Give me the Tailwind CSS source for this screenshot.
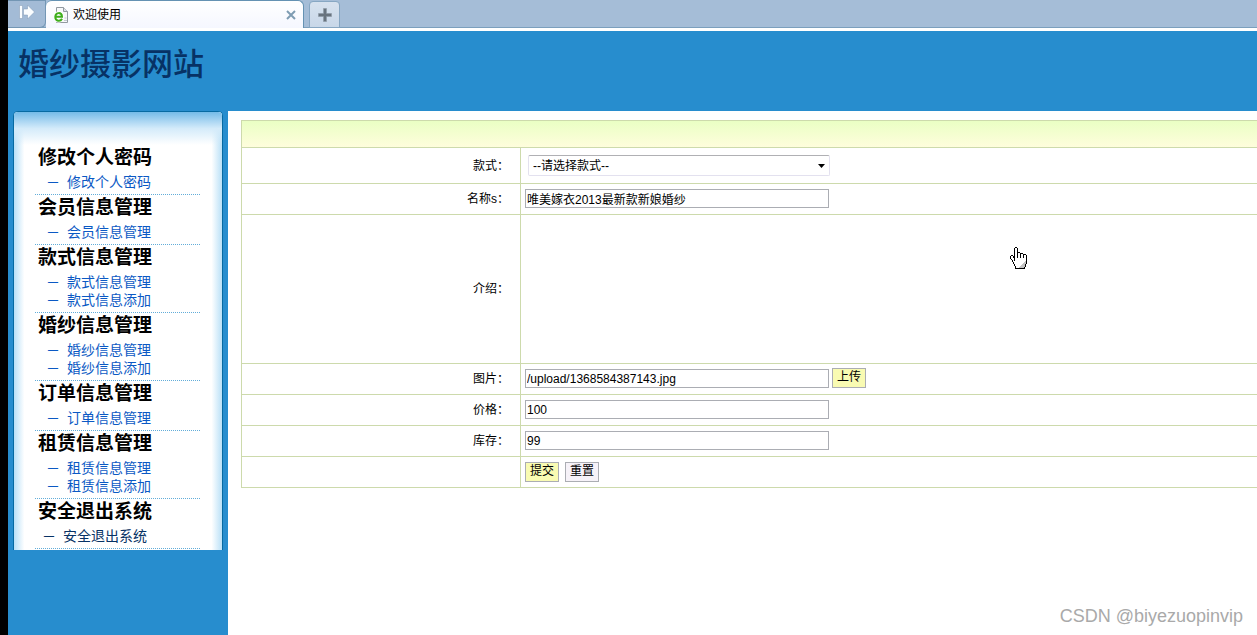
<!DOCTYPE html>
<html lang="zh-CN">
<head>
<meta charset="utf-8">
<title>欢迎使用</title>
<script src="https://cdn.jsdelivr.net/npm/@tailwindcss/browser@4"></script>
</head>
<body class="flex min-h-screen flex-col overflow-hidden border-l-8 border-black bg-white font-['Liberation_Sans','Noto_Sans_CJK_SC',sans-serif] text-xs text-black">

<!-- Browser tab strip -->
<div class="flex h-[28px] shrink-0 border-b border-[#7b9fbd] bg-[#a5bdd7]">
  <button type="button" aria-label="展开" class="flex h-[28px] w-[38px] items-start justify-center rounded-br-md border-t border-r border-b border-[#7396b4] bg-[#a3bbd6] pt-[3px]">
    <svg class="h-[16px] w-[18px]" viewBox="0 0 18 16" fill="#fafdff" stroke="#8099b5" stroke-width=".5"><path d="M1.500 1.500h3v13h-3z"/><path d="M5.500 5h4V1l7 7-7 7v-4h-4z"/></svg>
  </button>
  <div class="flex h-[28px] w-[258px] items-center rounded-t-md border-t border-r border-[#6592b3] bg-linear-to-b from-white to-[#f5f7ff] pl-[8px] pr-[7px]">
    <svg class="mr-[4px] h-[16px] w-[15px]" viewBox="0 0 15 16"><path d="M2.500.5h7l4 4v11h-11z" fill="#f7f8fa" stroke="#9299a0"/><path d="M9.500.5v4h4" fill="#dde2e7" stroke="#9299a0"/><path d="M10 13.500h3M10.500 11h2" stroke="#c5cad0"/><path d="M1.500 9.800H8C7.800 4.800 1.600 5 1.300 9.800c-.2 4.600 5.200 5 6.700 2" fill="none" stroke="#fff" stroke-width="3.600"/><path d="M1.500 9.800H8C7.800 4.800 1.600 5 1.300 9.800c-.2 4.600 5.200 5 6.700 2" fill="none" stroke="#3fae1c" stroke-width="2"/></svg>
    <span class="flex-1">欢迎使用</span>
    <button type="button" aria-label="关闭标签"><svg class="h-[10px] w-[10px]" viewBox="0 0 10 10" stroke="#7e9cb3" stroke-width="2"><path d="M1 1l8 8M9 1l-8 8"/></svg></button>
  </div>
  <button type="button" aria-label="新标签" class="mt-px ml-[5px] flex h-[27px] w-[31px] items-center justify-center rounded-t border border-[#87a7c3] bg-linear-to-b from-[#d7e2ef] to-[#c8d7e8]">
    <svg class="h-[14px] w-[14px]" viewBox="0 0 14 14"><path d="M5.500.5h3v5h5v3h-5v5h-3v-5h-5v-3h5z" fill="#68737e" stroke="#8c98a5" stroke-width=".6"/></svg>
  </button>
</div>

<header class="mt-[3px] h-20 shrink-0 bg-[#278dce] pl-[10px] pt-[11px]">
  <h1 class="text-[31px] leading-[46px] font-medium text-[#073265]">婚纱摄影网站</h1>
</header>

<div class="flex flex-1">
  <aside class="w-[220px] shrink-0 bg-[#278dce] pl-[5px]">
    <nav class="w-[210px] rounded-t-[5px] border-x border-t border-[#076aa2] bg-white">
      <div class="rounded-t bg-linear-to-r from-[#b9e0f7] via-white via-5% to-white">
      <div class="rounded-t bg-linear-to-l from-[#b9e0f7] via-white/0 via-5% to-white/0 pb-px">
        <div class="h-[33px] rounded-t bg-linear-to-b from-[#74bbe8] via-[#d4ebfa] via-50% to-white/0"></div>
        <div class="ml-[21px] mr-[22px] text-sm text-[#0b59c4]">
          <section class="border-b border-dotted border-[#62add9] pb-[3px]">
            <h2 class="pl-[3px] text-[19px] leading-[26px] font-bold text-black">修改个人密码</h2>
            <a href="#" class="mt-[2px] flex gap-[7px] pl-[11px] leading-[18px]"><span>－</span>修改个人密码</a>
          </section>
          <section class="border-b border-dotted border-[#62add9] pb-[3px]">
            <h2 class="pl-[3px] text-[19px] leading-[26px] font-bold text-black">会员信息管理</h2>
            <a href="#" class="mt-[2px] flex gap-[7px] pl-[11px] leading-[18px]"><span>－</span>会员信息管理</a>
          </section>
          <section class="border-b border-dotted border-[#62add9] pb-[3px]">
            <h2 class="pl-[3px] text-[19px] leading-[26px] font-bold text-black">款式信息管理</h2>
            <a href="#" class="mt-[2px] flex gap-[7px] pl-[11px] leading-[18px]"><span>－</span>款式信息管理</a>
            <a href="#" class="flex gap-[7px] pl-[11px] leading-[18px]"><span>－</span>款式信息添加</a>
          </section>
          <section class="border-b border-dotted border-[#62add9] pb-[3px]">
            <h2 class="pl-[3px] text-[19px] leading-[26px] font-bold text-black">婚纱信息管理</h2>
            <a href="#" class="mt-[2px] flex gap-[7px] pl-[11px] leading-[18px]"><span>－</span>婚纱信息管理</a>
            <a href="#" class="flex gap-[7px] pl-[11px] leading-[18px]"><span>－</span>婚纱信息添加</a>
          </section>
          <section class="border-b border-dotted border-[#62add9] pb-[3px]">
            <h2 class="pl-[3px] text-[19px] leading-[26px] font-bold text-black">订单信息管理</h2>
            <a href="#" class="mt-[2px] flex gap-[7px] pl-[11px] leading-[18px]"><span>－</span>订单信息管理</a>
          </section>
          <section class="border-b border-dotted border-[#62add9] pb-[3px]">
            <h2 class="pl-[3px] text-[19px] leading-[26px] font-bold text-black">租赁信息管理</h2>
            <a href="#" class="mt-[2px] flex gap-[7px] pl-[11px] leading-[18px]"><span>－</span>租赁信息管理</a>
            <a href="#" class="flex gap-[7px] pl-[11px] leading-[18px]"><span>－</span>租赁信息添加</a>
          </section>
          <section class="border-b border-dotted border-[#62add9] pb-[3px]">
            <h2 class="pl-[3px] text-[19px] leading-[26px] font-bold text-black">安全退出系统</h2>
            <a href="#" class="mt-[2px] flex gap-[7px] pl-[7px] leading-[18px] text-[#073265]"><span>－</span>安全退出系统</a>
          </section>
        </div>
      </div>
      </div>
    </nav>
  </aside>

  <main class="min-w-0 flex-1 overflow-hidden pl-[13px] pt-[9px]">
    <form>
      <table class="w-[calc(100%+8px)] table-fixed border-collapse border border-[#cddaac]">
        <colgroup><col class="w-[279px]"><col></colgroup>
        <thead>
          <tr class="h-[27px] bg-linear-to-b from-[#eaffc4] to-[#fffddd]"><th colspan="2" class="border border-[#cddaac]"></th></tr>
        </thead>
        <tbody>
          <tr class="h-[36px]">
            <td class="border border-[#cddaac] pr-[11px] text-right"><label for="style">款式：</label></td>
            <td class="border border-[#cddaac] pl-[7px]">
              <div class="relative flex w-[302px]">
                <select id="style" class="h-[21px] w-full appearance-none rounded-[2px] border border-[#e3e1ef] border-t-[#b0b0b4] bg-white pl-1 text-xs leading-[18px]"><option>--请选择款式--</option></select>
                <svg class="pointer-events-none absolute top-[9px] right-[5px] h-1 w-[7px]" viewBox="0 0 7 4"><path d="M0 0h7L3.500 4z"/></svg>
              </div>
            </td>
          </tr>
          <tr class="h-[31px]">
            <td class="border border-[#cddaac] pr-[11px] text-right"><label for="name">名称s：</label></td>
            <td class="border border-[#cddaac] pb-px pl-1"><input id="name" type="text" value="唯美嫁衣2013最新款新娘婚纱" class="block h-[19px] w-[304px] border border-[#abadb3] px-px leading-[17px]"></td>
          </tr>
          <tr class="h-[149px]">
            <td class="border border-[#cddaac] pr-[11px] text-right">介绍：</td>
            <td class="border border-[#cddaac]"></td>
          </tr>
          <tr class="h-[31px]">
            <td class="border border-[#cddaac] pr-[11px] text-right"><label for="picture">图片：</label></td>
            <td class="border border-[#cddaac] pb-[2px] pl-1"><div class="flex items-end gap-[3px]"><input id="picture" type="text" value="/upload/1368584387143.jpg" class="h-[19px] w-[304px] border border-[#abadb3] px-px leading-[17px]"><button type="button" class="h-5 w-[34px] border border-[#abadb3] bg-[#f9fbb2] pb-[2px] leading-4">上传</button></div></td>
          </tr>
          <tr class="h-[31px]">
            <td class="border border-[#cddaac] pr-[11px] text-right"><label for="price">价格：</label></td>
            <td class="border border-[#cddaac] pb-px pl-1"><input id="price" type="text" value="100" class="block h-[19px] w-[304px] border border-[#abadb3] px-px leading-[17px]"></td>
          </tr>
          <tr class="h-[31px]">
            <td class="border border-[#cddaac] pr-[11px] text-right"><label for="stock">库存：</label></td>
            <td class="border border-[#cddaac] pb-px pl-1"><input id="stock" type="text" value="99" class="block h-[19px] w-[304px] border border-[#abadb3] px-px leading-[17px]"></td>
          </tr>
          <tr class="h-[31px]">
            <td class="border border-[#cddaac]"></td>
            <td class="border border-[#cddaac] pl-1"><div class="flex gap-[6px]"><button type="submit" class="h-5 w-[34px] border border-[#abadb3] bg-[#f9fbb2] pb-[2px] leading-4">提交</button><button type="reset" class="h-5 w-[34px] border border-[#abadb3] bg-[#f6f2f8] pb-[2px] leading-4">重置</button></div></td>
          </tr>
        </tbody>
      </table>
    </form>
  </main>
</div>

<!-- Mouse pointer -->
<svg class="pointer-events-none absolute top-[247px] left-[1010px] h-[23px] w-[18px]" viewBox="0 0 18 23" shape-rendering="crispEdges"><path d="M4 12V1h4v5h3v1h3v1h2v1h1v7h-1v5H6v-2H4v-3H2v-3H1V9h3z" fill="#fff"/><path d="M15 14h1v3h-1v4H9v-1h1v-1h1v-1h1v-1h1v-1h1v-1h1z" fill="#c4c4c4"/><path d="M5 0h2v1H5zM4 1h1v13H4zM7 1h1v10H7zM8 5h2v1H8zM10 6h1v5h-1zM11 6h2v1h-2zM13 7h1v4h-1zM14 7h2v1h-2zM16 8h1v9h-1zM15 17h1v3h-1zM14 20h1v2h-1zM5 21h10v1H5zM5 19h1v2H5zM4 17h1v2H4zM3 15h1v2H3zM2 13h1v2H2zM1 12h1v1H1zM0 9h1v3H0zM1 8h2v1H1zM3 9h1v2H3z"/></svg>

<div class="pointer-events-none absolute right-[14px] bottom-[7px] text-lg leading-6 text-[#a9a9a9]">CSDN @biyezuopinvip</div>
</body>
</html>
